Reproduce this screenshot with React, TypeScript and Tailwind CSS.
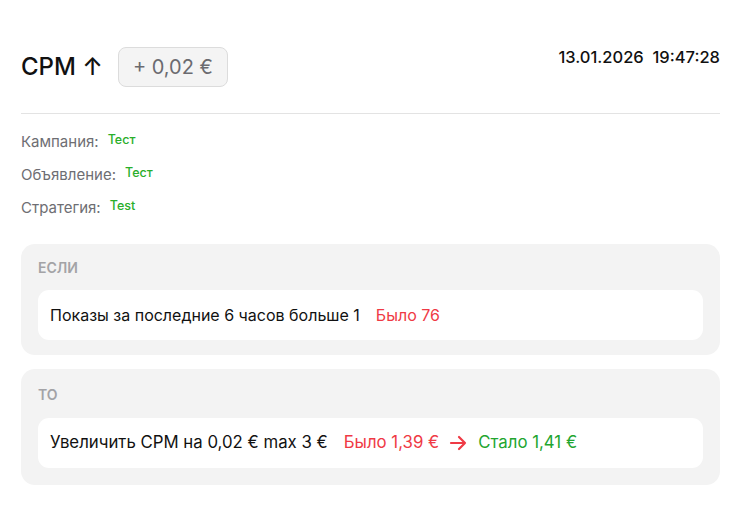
const metaRows = [
  { label: "Кампания:", value: "Тест" },
  { label: "Объявление:", value: "Тест" },
  { label: "Стратегия:", value: "Test" },
];

function ArrowRight() {
  return (
    <svg width="19" height="16" viewBox="0 0 19 16" fill="none" className="mx-[10px]">
      <path
        d="M2 8h14M10 2l6 6-6 6"
        stroke="#ef3a45"
        strokeWidth="2.2"
        strokeLinecap="round"
        strokeLinejoin="round"
      />
    </svg>
  );
}

function Block({
  title,
  className,
  gapClass,
  textClass,
  children,
}: {
  title: string;
  className: string;
  gapClass: string;
  textClass: string;
  children: React.ReactNode;
}) {
  return (
    <div className={"rounded-[14px] bg-[#f3f3f3] px-[17px] " + className}>
      <div className="text-[14px] leading-5 font-semibold text-[#a3a3a6] uppercase">
        {title}
      </div>
      <div
        className={
          "h-[50px] rounded-[11px] bg-white px-[12px] flex items-center text-[#111] " +
          gapClass +
          " " +
          textClass
        }
      >
        {children}
      </div>
    </div>
  );
}

export default function App() {
  return (
    <div
      className="w-[741px] h-[508px] bg-white px-[21px] pt-[47px]"
      style={{ fontFamily: "Inter, 'Noto Sans', sans-serif" }}
    >
      <div className="flex items-start justify-between">
        <div className="flex items-center h-10">
          <span className="text-[24px] font-medium text-[#111]">CPM ↑</span>
          <span className="ml-[15px] h-10 px-[14px] flex items-center rounded-[8px] border border-[#dcdcdc] bg-[#f4f4f4] text-[20px] text-[#6b6b70]">
            + 0,02 €
          </span>
        </div>
        <div className="text-[16.5px] leading-5 font-medium text-[#111]">
          13.01.2026&nbsp;&nbsp;19:47:28
        </div>
      </div>

      <div className="mt-[26px] h-px bg-[#e3e3e3]" />

      <div className="mt-[18px] flex flex-col gap-[13px]">
        {metaRows.map((r) => (
          <div key={r.label} className="flex items-start h-5 text-[15px] leading-5">
            <span className="text-[#6e6e73]">{r.label}</span>
            <span className="ml-[9px] text-[12.5px] leading-4 font-medium text-[#2aae2a]">
              {r.value}
            </span>
          </div>
        ))}
      </div>

      <div className="mt-[26px] flex flex-col gap-[14px]">
        <Block title="Если" className="pt-[14px] pb-[15px]" gapClass="mt-[12px]" textClass="text-[16px]">
          <span>Показы за последние 6 часов больше 1</span>
          <span className="ml-4 text-[#ef3a45]">Было 76</span>
        </Block>
        <Block title="То" className="pt-[16px] pb-[17px]" gapClass="mt-[13px]" textClass="text-[16.8px]">
          <span>Увеличить CPM на 0,02 € max 3 €</span>
          <span className="ml-4 text-[#ef3a45]">Было 1,39 €</span>
          <ArrowRight />
          <span className="text-[#22a52f]">Стало 1,41 €</span>
        </Block>
      </div>
    </div>
  );
}
